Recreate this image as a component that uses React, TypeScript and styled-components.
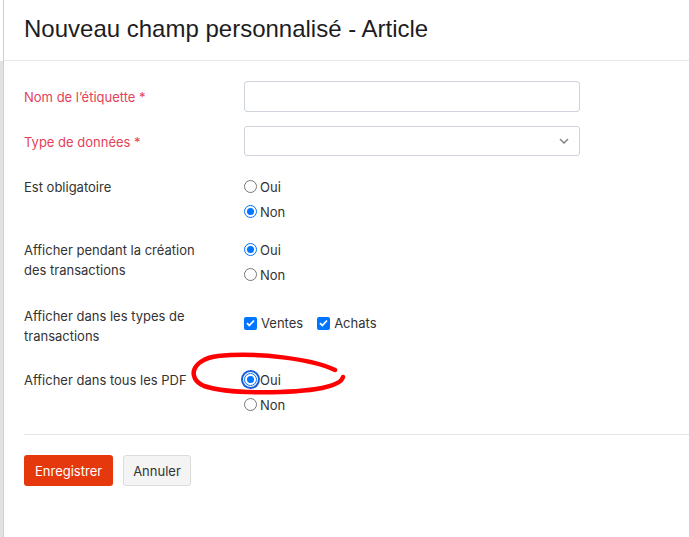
import { createGlobalStyle } from 'styled-components'
import styled from 'styled-components'

const GlobalStyle = createGlobalStyle`
  html, body {
    margin: 0;
    padding: 0;
    background: #fff;
  }
  body {
    font-family: Inter, "Liberation Sans", sans-serif;
    color: #333;
  }
`

type Option = { label: string; checked?: boolean; focused?: boolean }

const rows: {
  label: string
  required?: boolean
  kind: 'input' | 'select' | 'radio' | 'check'
  options?: Option[]
  gap: number
}[] = [
  { label: 'Nom de l’étiquette', required: true, kind: 'input', gap: 0 },
  { label: 'Type de données', required: true, kind: 'select', gap: 14 },
  {
    label: 'Est obligatoire',
    kind: 'radio',
    options: [{ label: 'Oui' }, { label: 'Non', checked: true }],
    gap: 18,
  },
  {
    label: 'Afficher pendant la création des transactions',
    kind: 'radio',
    options: [{ label: 'Oui', checked: true }, { label: 'Non' }],
    gap: 13,
  },
  {
    label: 'Afficher dans les types de transactions',
    kind: 'check',
    options: [
      { label: 'Ventes', checked: true },
      { label: 'Achats', checked: true },
    ],
    gap: 16,
  },
  {
    label: 'Afficher dans tous les PDF',
    kind: 'radio',
    options: [{ label: 'Oui', checked: true, focused: true }, { label: 'Non' }],
    gap: 21,
  },
]

export default function App() {
  return (
    <>
      <GlobalStyle />
      <Shell>
        <LeftStrip />
        <Page>
          <Header>
            <Title>Nouveau champ personnalisé - Article</Title>
          </Header>
          <Body>
            {rows.map((row, i) => (
              <Row key={i} $gap={row.gap}>
                <Label $required={row.required} $inline={row.kind === 'input' || row.kind === 'select'}>
                  {row.label}
                  {row.required && ' *'}
                </Label>
                {row.kind === 'input' && <TextInput type='text' />}
                {row.kind === 'select' && (
                  <SelectBox>
                    <svg width='10' height='6' viewBox='0 0 10 6'>
                      <path d='M1 1l4 4 4-4' fill='none' stroke='#8a8a8a' strokeWidth='1.6' />
                    </svg>
                  </SelectBox>
                )}
                {row.kind === 'radio' && (
                  <RadioGroup>
                    {row.options!.map((opt) => (
                      <RadioLine key={opt.label}>
                        <Radio $checked={opt.checked} $focused={opt.focused} />
                        <OptionText>{opt.label}</OptionText>
                      </RadioLine>
                    ))}
                  </RadioGroup>
                )}
                {row.kind === 'check' && (
                  <CheckGroup>
                    {row.options!.map((opt) => (
                      <CheckLine key={opt.label}>
                        <CheckBox>
                          <svg width='9' height='8' viewBox='0 0 9 8'>
                            <path d='M1 4.2l2.3 2.3L8 1.5' fill='none' stroke='#fff' strokeWidth='1.8' />
                          </svg>
                        </CheckBox>
                        <OptionText>{opt.label}</OptionText>
                      </CheckLine>
                    ))}
                  </CheckGroup>
                )}
              </Row>
            ))}
            <Divider />
            <Actions>
              <PrimaryButton>Enregistrer</PrimaryButton>
              <SecondaryButton>Annuler</SecondaryButton>
            </Actions>
          </Body>
          <Scribble width='689' height='537' viewBox='0 0 689 537'>
            <path
              d='M335 370 C 312 359, 258 352, 218 356 C 192 359, 186 378, 204 386 C 230 395, 296 393, 322 388 C 336 385, 342 381, 343 377'
              fill='none'
              stroke='#ff0000'
              strokeWidth='4.5'
              strokeLinecap='round'
            />
          </Scribble>
        </Page>
      </Shell>
    </>
  )
}

const Shell = styled.div`
  display: flex;
  width: 689px;
  height: 537px;
  overflow: hidden;
`

const LeftStrip = styled.div`
  flex: 0 0 3px;
  background: linear-gradient(#fff 0, #fff 61px, #e2e2e2 61px);
`

const Page = styled.div`
  position: relative;
  flex: 1;
  border-left: 1px solid #cfcfcf;
`

const Header = styled.div`
  height: 60px;
  display: flex;
  align-items: center;
  padding: 0 20px;
  border-bottom: 1px solid #e8e8e8;
`

const Title = styled.h1`
  margin: 0;
  font-family: 'Liberation Sans', Arial, sans-serif;
  font-weight: 400;
  font-size: 24px;
  color: #1d1d1f;
  margin-top: -3px;
`

const Body = styled.div`
  padding: 20px 0 0 20px;
`

const Row = styled.div<{ $gap: number }>`
  display: grid;
  grid-template-columns: 220px 336px;
  align-items: start;
  margin-top: ${({ $gap }) => $gap}px;
`

const Label = styled.div<{ $required?: boolean; $inline?: boolean }>`
  font-size: 13px;
  line-height: 20px;
  color: ${({ $required }) => ($required ? '#e43f5a' : '#333')};
  padding-top: ${({ $inline }) => ($inline ? '6px' : '3px')};
  padding-right: 30px;
`

const TextInput = styled.input`
  box-sizing: border-box;
  height: 31px;
  width: 336px;
  border: 1px solid #cfd4dc;
  border-radius: 3px;
  outline: none;
`

const SelectBox = styled.div`
  box-sizing: border-box;
  height: 30px;
  width: 336px;
  border: 1px solid #cfd4dc;
  border-radius: 3px;
  display: flex;
  align-items: center;
  justify-content: flex-end;
  padding-right: 10px;
`

const RadioGroup = styled.div`
  display: flex;
  flex-direction: column;
`

const RadioLine = styled.div`
  height: 25px;
  display: flex;
  align-items: center;
`

const Radio = styled.span<{ $checked?: boolean; $focused?: boolean }>`
  box-sizing: border-box;
  width: 13px;
  height: 13px;
  border-radius: 50%;
  border: 1px solid ${({ $checked }) => ($checked ? '#0075ff' : '#767676')};
  background: #fff;
  margin-right: 3px;
  position: relative;
  box-shadow: ${({ $focused }) => ($focused ? '0 0 0 1px #fff, 0 0 0 3px #1a5fd6' : 'none')};

  &::after {
    content: '';
    display: ${({ $checked }) => ($checked ? 'block' : 'none')};
    position: absolute;
    inset: 2px;
    border-radius: 50%;
    background: #0075ff;
  }
`

const OptionText = styled.span`
  font-size: 13px;
  color: #333;
`

const CheckGroup = styled.div`
  display: flex;
  gap: 14px;
  padding-top: 12px;
`

const CheckLine = styled.div`
  display: flex;
  align-items: center;
`

const CheckBox = styled.span`
  width: 13px;
  height: 13px;
  border-radius: 2px;
  background: #0075ff;
  display: flex;
  align-items: center;
  justify-content: center;
  margin-right: 4px;
`

const Divider = styled.div`
  margin-top: 17px;
  border-top: 1px solid #e4e4e4;
`

const Actions = styled.div`
  display: flex;
  gap: 10px;
  margin-top: 20px;
`

const PrimaryButton = styled.button`
  height: 31px;
  padding: 0 11px;
  border: none;
  border-radius: 3px;
  background: #e5380d;
  color: #fff;
  font-family: Inter, 'Liberation Sans', sans-serif;
  font-size: 13px;
`

const SecondaryButton = styled.button`
  height: 31px;
  padding: 0 9px;
  border: 1px solid #dcdcdc;
  border-radius: 3px;
  background: #f4f4f4;
  color: #333;
  font-family: Inter, 'Liberation Sans', sans-serif;
  font-size: 13px;
`

const Scribble = styled.svg`
  position: absolute;
  left: -4px;
  top: 0;
  pointer-events: none;
`
